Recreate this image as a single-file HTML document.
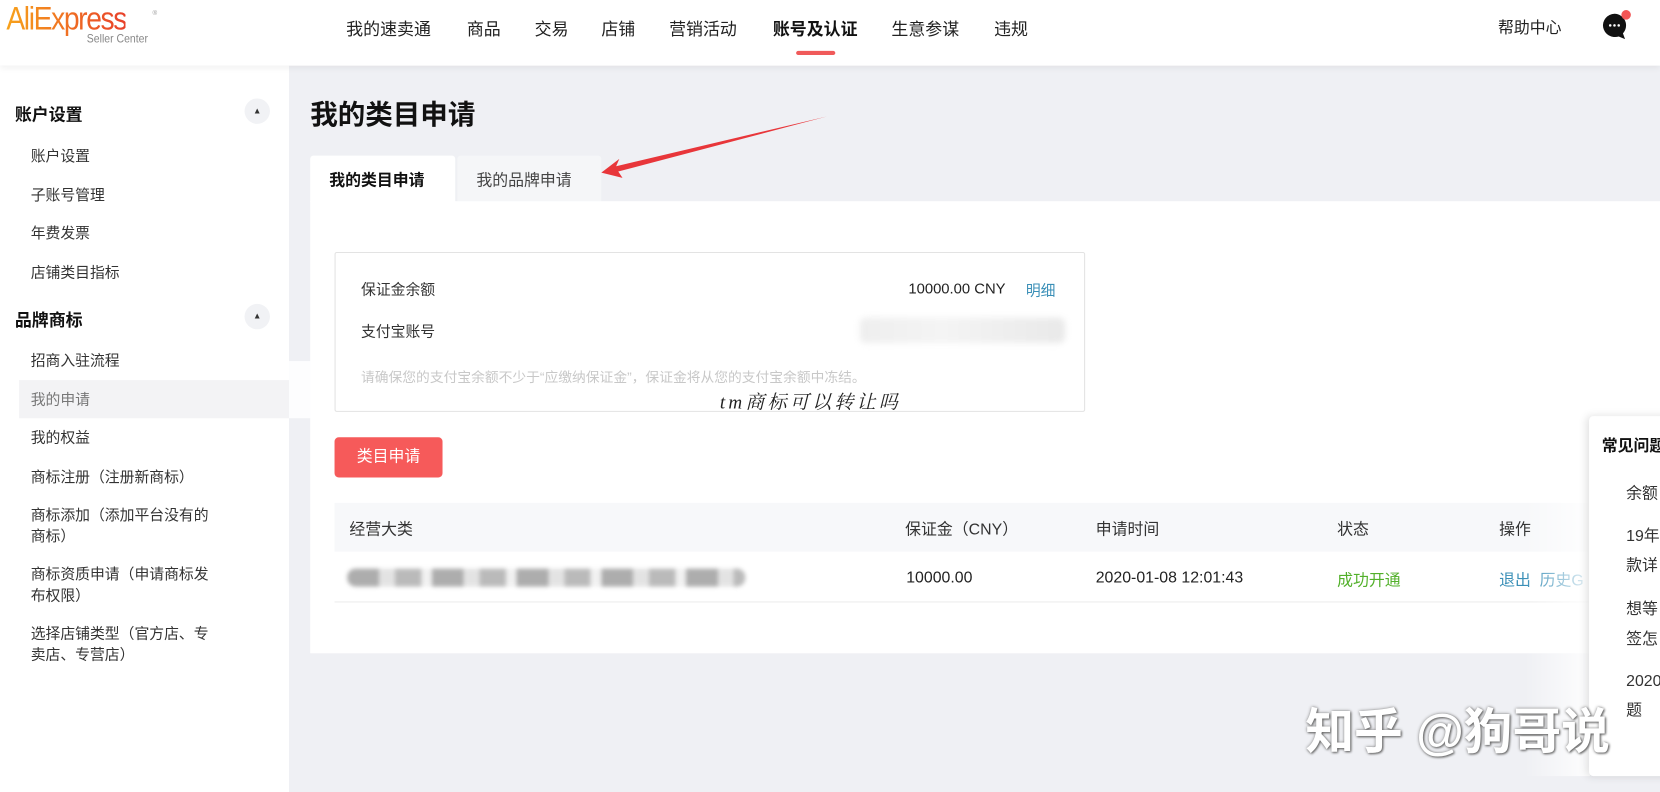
<!DOCTYPE html>
<html><head><meta charset="utf-8"><style>
*{margin:0;padding:0;box-sizing:border-box}
html,body{width:1660px;height:792px;overflow:hidden;background:#eff0f4}
body{font-family:"Liberation Sans","Noto Sans CJK SC",sans-serif;color:#333}
#s{position:absolute;left:0;top:0;width:1568px;height:748px;transform:scale(1.05867,1.0588);transform-origin:0 0;background:#eff0f4;overflow:hidden}
.a{position:absolute;white-space:nowrap}
.hd{position:absolute;left:0;top:0;width:1568px;height:62px;background:#fff;box-shadow:0 2px 6px rgba(0,0,0,.06);z-index:2}
.nav{font-size:16px;color:#222;top:14px}
.sb{position:absolute;left:0;top:62px;width:273px;height:686px;background:#fff}
.sh{font-size:16px;font-weight:bold;color:#111;left:14px}
.si{font-size:14px;color:#333;left:29px;line-height:20px}
.cb{position:absolute;left:231px;width:24px;height:24px;border-radius:12px;background:#f1f2f5;font-size:8px;color:#333;text-align:center;line-height:24px}
</style></head><body><div id="s">
<div class="hd">
 <div class="a" style="left:6px;top:0px;font-size:31px;letter-spacing:-1.5px;transform:scaleX(.86);transform-origin:0 0;background:linear-gradient(90deg,#f7a21b,#e8402a);-webkit-background-clip:text;color:transparent">AliExpress</div>
 <div class="a" style="left:144px;top:10px;font-size:6px;color:#999">®</div>
 <div class="a" style="left:82px;top:31px;font-size:11px;color:#888;transform:scaleX(.9);transform-origin:0 0">Seller Center</div>
 <div class="a nav" style="left:327px">我的速卖通</div>
 <div class="a nav" style="left:441px">商品</div>
 <div class="a nav" style="left:505px">交易</div>
 <div class="a nav" style="left:568px">店铺</div>
 <div class="a nav" style="left:632px">营销活动</div>
 <div class="a nav" style="left:730px;font-weight:bold;color:#111">账号及认证</div>
 <div class="a" style="left:752px;top:48px;width:37px;height:4px;border-radius:2px;background:#f05a5a"></div>
 <div class="a nav" style="left:842px">生意参谋</div>
 <div class="a nav" style="left:939px">违规</div>
 <div class="a nav" style="left:1415px;font-size:15px;top:15px">帮助中心</div>
 <svg class="a" style="left:1510px;top:8px" width="34" height="34" viewBox="0 0 34 34"><path d="M15 5a11.5 11 0 1 0 4 21.5l6 2.5-2-5.5A11 11 0 0 0 15 5z" fill="#111"/><circle cx="11" cy="16" r="1.2" fill="#fff"/><circle cx="15" cy="16" r="1.2" fill="#fff"/><circle cx="19" cy="16" r="1.2" fill="#fff"/><circle cx="26" cy="6" r="4.5" fill="#f25555"/></svg>
</div>
<div class="sb">
 <div class="a sh" style="top:33px">账户设置</div><div class="cb" style="top:31px">▲</div>
 <div class="a si" style="top:75px">账户设置</div>
 <div class="a si" style="top:112px">子账号管理</div>
 <div class="a si" style="top:148px">年费发票</div>
 <div class="a si" style="top:185px">店铺类目指标</div>
 <div class="a sh" style="top:227px">品牌商标</div><div class="cb" style="top:225px">▲</div>
 <div class="a si" style="top:268px">招商入驻流程</div>
 <div class="a" style="left:18px;top:297px;width:255px;height:36px;background:#f3f3f5"></div>
 <div class="a si" style="top:305px;color:#777">我的申请</div>
 <div class="a si" style="top:341px">我的权益</div>
 <div class="a si" style="top:378px">商标注册（注册新商标）</div>
 <div class="a si" style="top:414px">商标添加（添加平台没有的<br>商标）</div>
 <div class="a si" style="top:470px">商标资质申请（申请商标发<br>布权限）</div>
 <div class="a si" style="top:526px">选择店铺类型（官方店、专<br>卖店、专营店）</div>
</div>
<div class="a" style="left:293px;top:88px;font-size:26px;font-weight:bold;color:#111">我的类目申请</div>
<div class="a" style="left:293px;top:147px;width:137px;height:44px;background:#fff;border-radius:3px 3px 0 0"></div>
<div class="a" style="left:311px;top:159px;font-size:15px;font-weight:bold;color:#111">我的类目申请</div>
<div class="a" style="left:432px;top:147px;width:136px;height:43px;background:#f5f6f8;border-radius:3px 3px 0 0"></div>
<div class="a" style="left:450px;top:159px;font-size:15px;color:#444">我的品牌申请</div>
<div class="a" style="left:293px;top:190px;width:1275px;height:427px;background:#fff"></div>
<div class="a" style="left:273px;top:341px;width:1295px;height:54px;background:rgba(255,255,255,.85)"></div>
<div class="a" style="left:316px;top:238px;width:709px;height:151px;border:1px solid #e3e3e3;border-radius:2px;background:#fff"></div>
<div class="a" style="left:341px;top:263px;font-size:14px">保证金余额</div>
<div class="a" style="left:858px;top:264px;font-size:14px;color:#222">10000.00 CNY</div>
<div class="a" style="left:969px;top:264px;font-size:14px;color:#3a8fb7">明细</div>
<div class="a" style="left:341px;top:303px;font-size:14px">支付宝账号</div>
<div class="a" style="left:812px;top:300px;width:194px;height:24px;background:linear-gradient(90deg,#eee,#f4f4f4 40%,#e9e9e9);filter:blur(3px);border-radius:6px"></div>
<div class="a" style="left:341px;top:346px;font-size:13px;color:#c8c8c8">请确保您的支付宝余额不少于“应缴纳保证金”，保证金将从您的支付宝余额中冻结。</div>
<div class="a" style="left:680px;top:366px;font-size:18px;font-style:italic;color:#222;font-family:'Liberation Serif','Noto Serif CJK SC',serif;letter-spacing:3px">tm商标可以转让吗</div>
<div class="a" style="left:316px;top:413px;width:102px;height:38px;background:#f65a5a;border-radius:4px;color:#fff;font-size:15px;text-align:center;line-height:38px">类目申请</div>
<div class="a" style="left:316px;top:475px;width:1200px;height:46px;background:#f7f8fa"></div>
<div class="a" style="left:316px;top:568px;width:1200px;height:1px;background:#ececec"></div>
<div class="a" style="left:330px;top:489px;font-size:15px">经营大类</div>
<div class="a" style="left:855px;top:489px;font-size:15px">保证金（CNY）</div>
<div class="a" style="left:1035px;top:489px;font-size:15px">申请时间</div>
<div class="a" style="left:1263px;top:489px;font-size:15px">状态</div>
<div class="a" style="left:1416px;top:489px;font-size:15px">操作</div>
<div class="a" style="left:328px;top:537px;width:376px;height:17px;background:repeating-linear-gradient(90deg,#999 0 30px,#ddd 30px 45px,#aaa 45px 70px,#eee 70px 80px);filter:blur(2px);border-radius:8px;opacity:.8"></div>
<div class="a" style="left:856px;top:537px;font-size:15px;color:#222">10000.00</div>
<div class="a" style="left:1035px;top:537px;font-size:15px;color:#222">2020-01-08 12:01:43</div>
<div class="a" style="left:1263px;top:537px;font-size:15px;color:#52b02a">成功开通</div>
<div class="a" style="left:1416px;top:537px;font-size:15px;color:#3a8fb7">退出 &nbsp;历史G</div>
<div class="a" style="left:1440px;top:393px;width:62px;height:340px;background:linear-gradient(90deg,rgba(255,255,255,0),rgba(255,255,255,.9))"></div>
<div class="a" style="left:1501px;top:393px;width:80px;height:340px;background:#fff;box-shadow:-2px 0 8px rgba(0,0,0,.12);border-radius:4px"></div>
<div class="a" style="left:1513px;top:410px;font-size:15px;font-weight:bold;color:#111">常见问题</div>
<div class="a" style="left:1536px;top:455px;font-size:15px">余额</div>
<div class="a" style="left:1536px;top:493px;font-size:15px;line-height:28px">19年<br>款详</div>
<div class="a" style="left:1536px;top:562px;font-size:15px;line-height:28px">想等<br>签怎</div>
<div class="a" style="left:1536px;top:630px;font-size:15px;line-height:28px">2020<br>题</div>
<svg class="a" style="left:0;top:0" width="1568" height="748"><path d="M781 110 L582 157 L585 150 L568 163 L588 168 L584 162 Z" fill="#e8363a"/></svg>
<div class="a" style="left:1233px;top:655px;font-size:46px;font-weight:bold;color:#fff;text-shadow:1px 1px 2px #666,0 0 3px #888">知乎 @狗哥说</div>
</div></body></html>
